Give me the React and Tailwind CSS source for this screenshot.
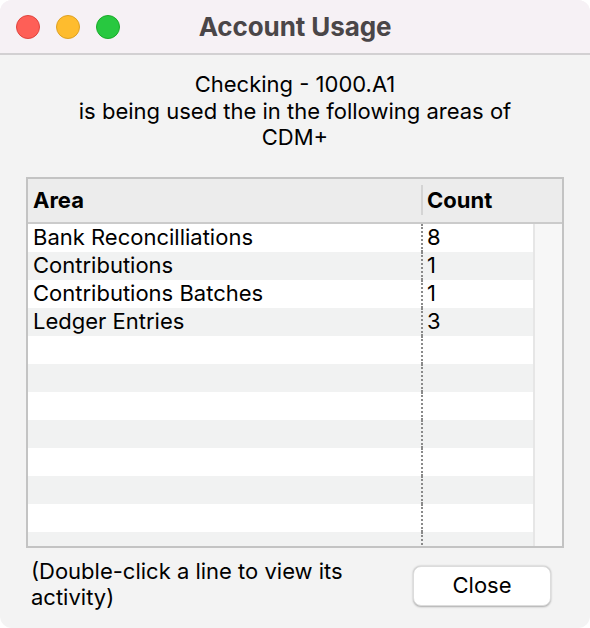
import React from "react";

// rows shown in the usage table; blank ones fill the remaining space
const rows = [
  { area: "Bank Reconcilliations", count: "8" },
  { area: "Contributions", count: "1" },
  { area: "Contributions Batches", count: "1" },
  { area: "Ledger Entries", count: "3" },
  { area: "", count: "" },
  { area: "", count: "" },
  { area: "", count: "" },
  { area: "", count: "" },
  { area: "", count: "" },
  { area: "", count: "" },
  { area: "", count: "" },
  { area: "", count: "" },
];

const font = { fontFamily: "Inter, 'Liberation Sans', sans-serif" };

export default function App() {
  return (
    <div className="w-[590px] h-[628px] bg-white" style={font}>
      <div className="flex flex-col h-full rounded-[12px] overflow-hidden bg-[#f3f3f3]">
        {/* title bar */}
        <div className="grid grid-cols-[1fr_auto_1fr] items-center h-[55px] bg-[#f6f1f5] border-b-2 border-[#d2d0d2] shrink-0">
          <div className="flex items-center gap-[16px] pl-[16px]">
            <span className="w-[24px] h-[24px] rounded-full bg-[#fe5f57] border border-[#e0443e]" />
            <span className="w-[24px] h-[24px] rounded-full bg-[#febc2e] border border-[#dea123]" />
            <span className="w-[24px] h-[24px] rounded-full bg-[#28c840] border border-[#1aab29]" />
          </div>
          <h1 className="text-[26px] leading-[32px] font-bold text-[#4a4648] tracking-[-0.1px] pt-[1px]">Account Usage</h1>
          <div />
        </div>

        {/* message */}
        <div className="pt-[16px] text-center text-[22px] leading-[26.5px] text-black">
          <p>Checking - 1000.A1</p>
          <p>is being used the in the following areas of</p>
          <p>CDM+</p>
        </div>

        {/* table */}
        <div className="mt-[26px] mx-[26px] h-[371px] border-2 border-[#c3c3c3] bg-white flex flex-col overflow-hidden">
          <div className="flex items-center h-[45px] bg-[#ececec] border-b-2 border-[#cbcbcb] shrink-0 text-[22px] font-bold text-black">
            <div className="w-[393px] pl-[5px]">Area</div>
            <div className="w-[2px] h-[30px] bg-[#d4d4d4]" />
            <div className="pl-[4px]">Count</div>
          </div>
          <div className="flex flex-1 min-h-0">
            <div className="flex-1 relative overflow-hidden">
              {rows.map((row, i) => (
                <div
                  key={i}
                  className={
                    "flex items-center h-[28px] text-[22px] text-black " +
                    (i % 2 === 0 ? "bg-white" : "bg-[#f1f2f2]")
                  }
                >
                  <div className="w-[393px] pl-[5px] whitespace-nowrap">{row.area}</div>
                  <div className="w-[2px] h-full border-l-2 border-dotted border-[#8a8a8a]" />
                  <div className="pl-[4px]">{row.count}</div>
                </div>
              ))}
            </div>
            <div className="w-[29px] bg-[#f7f7f7] border-l-2 border-[#e6e6e6]" />
          </div>
        </div>

        {/* footer */}
        <div className="flex items-start justify-between pl-[31px] pr-[39px] pt-[10px]">
          <p className="text-[22px] leading-[26px] text-black w-[330px]">
            (Double-click a line to view its activity)
          </p>
          <button className="w-[138px] h-[40px] mt-[8px] bg-white rounded-[8px] text-[22px] text-black shadow-[0_0.5px_2px_rgba(0,0,0,0.3)] border border-[#dcdcdc]">
            Close
          </button>
        </div>
      </div>
    </div>
  );
}
